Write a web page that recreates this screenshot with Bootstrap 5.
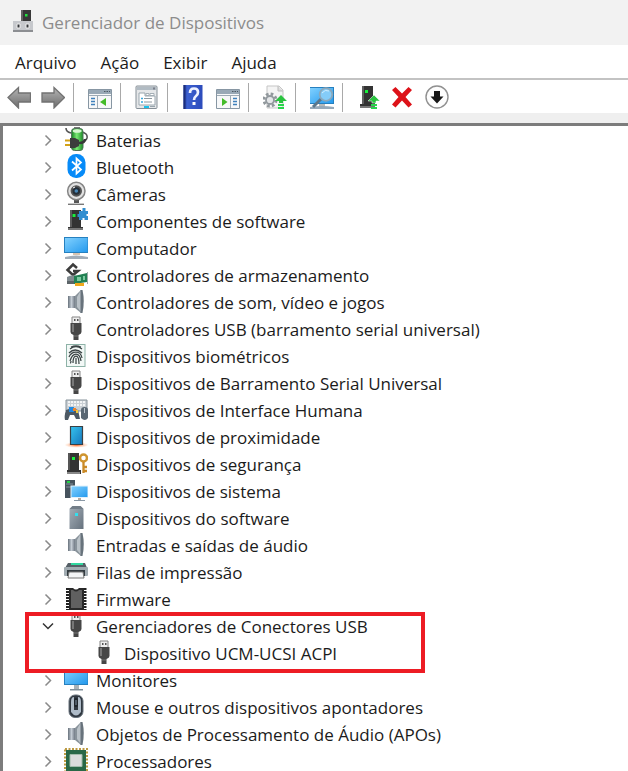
<!DOCTYPE html>
<html lang="pt-BR">
<head>
<meta charset="utf-8">
<meta name="viewport" content="width=device-width, initial-scale=1">
<title>Gerenciador de Dispositivos</title>
<link href="https://cdn.jsdelivr.net/npm/bootstrap@5.3.0/dist/css/bootstrap.min.css" rel="stylesheet">
<style>
body{font-family:"Open Sans","Noto Sans",sans-serif;font-size:17px;line-height:27px;color:#1b1b1b;background:#efefef}
.title-bar{background:#f2f2f2;height:45px;padding-left:12px;gap:6px;color:#8c8c8c}
.title-bar h1{font-size:17px;line-height:27px;font-weight:400}
.menu-bar{background:#fff;height:35px;padding:2px 15px 0;gap:24px;border-bottom:2px solid #c3c3c3}
.menu-bar button,.tool-bar button,.twist{border:0;background:none;padding:0;color:inherit;line-height:27px}
.tool-bar{background:#fff;height:33px;padding:3px 7px 0}
.tool-set{gap:10px;height:29px;padding-right:8px;margin-right:14px;border-right:1px solid #a9a9a9;align-items:center}
.tool-set:last-child{border:0}
.tool-bar button{display:flex}
.pic{width:24px;height:24px;flex:none;display:block}
.tree-pane{background:#fff;margin-top:10px;border:solid #7c7c7c;border-width:3px 0 0 3px;padding:1px 0 0 37px}
.tree-row{height:27px;gap:8px}
.tree-row .twist{width:16px;height:27px;display:flex;align-items:center;justify-content:center}
.tree-row .twist svg{width:16px;height:16px}
.sub-row{padding-left:52px}
.marked{position:relative}
.marked::after{content:"";position:absolute;left:-15px;top:-1px;width:400px;height:61px;border:4px solid #ed1c24;pointer-events:none;z-index:1}
</style>
<script src="https://cdn.jsdelivr.net/npm/bootstrap@5.3.0/dist/js/bootstrap.bundle.min.js"></script>
</head>
<body class="vh-100 d-flex flex-column overflow-hidden">
<svg width="0" height="0" class="position-absolute" aria-hidden="true">
<defs>
<linearGradient id="gScreen" x2="1" y2="1"><stop stop-color="#83d2ff"/><stop offset="1" stop-color="#2298ed"/></linearGradient>
<linearGradient id="gSteel" x2="1"><stop stop-color="#68727c"/><stop offset=".5" stop-color="#c4ccd4"/><stop offset="1" stop-color="#707984"/></linearGradient>
<linearGradient id="gBox" x2="1" y2="1"><stop stop-color="#a7b1ba"/><stop offset="1" stop-color="#65717d"/></linearGradient>
<linearGradient id="gArrow" x2="0" y2="1"><stop stop-color="#b5b5b5"/><stop offset="1" stop-color="#6c6c6c"/></linearGradient>
<linearGradient id="gHelp" x2="1" y2="0"><stop stop-color="#203a9a"/><stop offset=".2" stop-color="#3c60d0"/><stop offset="1" stop-color="#2c4bbb"/></linearGradient>
<linearGradient id="gGreen" x2="1"><stop stop-color="#167d22"/><stop offset=".45" stop-color="#7bea75"/><stop offset="1" stop-color="#1b8a26"/></linearGradient>
<linearGradient id="gTablet" x2="1" y2="1"><stop stop-color="#37c4ee"/><stop offset="1" stop-color="#1576bd"/></linearGradient>
<radialGradient id="gGlow"><stop stop-color="#ff5a14"/><stop offset="1" stop-color="#ffb98c" stop-opacity=".1"/></radialGradient>
<symbol id="right" viewBox="0 0 16 16"><path d="M5.500 3.500l5 5-5 5" fill="none" stroke="#8a8a8a" stroke-width="1.500"/></symbol>
<symbol id="down" viewBox="0 0 16 16"><path d="M3 5.500l5 5 5-5" fill="none" stroke="#333" stroke-width="1.500"/></symbol>
<symbol id="battery" viewBox="0 0 24 24"><path d="M2 1q0 4 5 5M17 5q7 1 6 6-1 4-8 4" fill="none" stroke="#555" stroke-width="1.600"/><rect x="10" y="0" width="6" height="3" fill="#777"/><rect x="7.500" y="1.500" width="11.500" height="22" rx="3" fill="url(#gGreen)" stroke="#50745a"/><ellipse cx="13.200" cy="4" rx="4.500" ry="1.800" fill="#d8f5d2"/><path d="M1 13.500h6M1 18h6" stroke="#d3a117" stroke-width="2"/><path d="M6 11h5l4 2v6l-4 2H6z" fill="#3c3c3c"/><path d="M15 16q6 0 6-4" fill="none" stroke="#383838" stroke-width="2.600"/></symbol>
<symbol id="bluetooth" viewBox="0 0 24 24"><rect x="3.500" y="0" width="18" height="24" rx="8.500" fill="#078bf8"/><path d="M8 7.500l9 8-4.500 4V4.500L17 8.500l-9 8" fill="none" stroke="#fff" stroke-width="1.700"/></symbol>
<symbol id="camera" viewBox="0 0 24 24"><path d="M10 18h5v4h-5z" fill="#555"/><path d="M4 23.300h16" stroke="#777" stroke-width="1.400"/><circle cx="12.300" cy="10" r="8.700" fill="#e2e2e2" stroke="#858585" stroke-width="1.500"/><circle cx="12.300" cy="10" r="5.700" fill="#555"/><circle cx="12.300" cy="10" r="3.800" fill="#252f39"/><circle cx="12.300" cy="10" r="1.800" fill="#4987b7"/><path d="M9 7l2-1" stroke="#fff"/></symbol>
<symbol id="component" viewBox="0 0 24 24"><path d="M6 2h11v17h2v3H4v-3h2z" fill="#333"/><path d="M6 2h2v17H6z" fill="#5c5c5c"/><path d="M4 20h15v2H4z" fill="#777"/><rect x="8.500" y="6" width="3" height="3" fill="#19ef3c"/><path d="M15 3h3.500V0h3v3H24v3h-1.500v2H24v4h-3.500v-2h-2v2H15V9h-1.500V6H15z" fill="#318ed0"/></symbol>
<symbol id="computer" viewBox="0 0 24 24"><rect x=".5" y="2.500" width="23.500" height="15" fill="url(#gScreen)" stroke="#2680bf"/><path d="M9 18h7v2H9z" fill="#d6c3b0"/><path d="M1 22q11-3 23 0v2H1z" fill="#a2adb8"/></symbol>
<symbol id="monitor" viewBox="0 0 24 24"><rect x=".5" y="2.500" width="23.500" height="15" fill="url(#gScreen)" stroke="#2680bf"/><path d="M10 18h5v4h-5z" fill="#a9b2b8"/><path d="M6 22h13v1.500H6z" fill="#81909a"/></symbol>
<symbol id="storage" viewBox="0 0 24 24"><path d="M13 6L9 2.500 3.500 8 9 13l5-4H9" fill="none" stroke="#3c3c3c" stroke-width="2.500"/><path d="M3 15q5-3 10-1v6H3z" fill="#818b90"/><path d="M3 19h10v3H3z" fill="#5c6468"/><path d="M10 14l13-3v9l-13 2z" fill="#238154"/><path d="M13 15h4v4h-4zM19 14h2v4h-2z" fill="#7ccba0"/><path d="M23.500 10v12" stroke="#9eaaa8"/><path d="M11 21h9v3h-9z" fill="#efa81d"/></symbol>
<symbol id="speaker" viewBox="0 0 24 24"><path d="M4 7h7v12H4z" fill="url(#gSteel)"/><path d="M11 7l6-6v23l-6-5z" fill="#89939b"/><path d="M13 8l4-7v22l-4-5z" fill="#b9c1c7"/><path d="M16.500 1h2q2.500 11 0 23h-2z" fill="#68737c"/></symbol>
<symbol id="usb" viewBox="0 0 24 24"><path d="M8 1h8v7H8z" fill="#eee" stroke="#858585"/><path d="M10 3h1.500v2H10zM13 3h1.500v2H13z" fill="#555"/><path d="M6.500 7h11v9q0 2-3 3v5h-5v-5q-3-1-3-3z" fill="#464646"/><path d="M8 8h2v8H8z" fill="#777"/><path d="M10 20h4" stroke="#777"/></symbol>
<symbol id="finger" viewBox="0 0 24 24"><rect x="2.500" y="1.500" width="18.500" height="22" fill="#f2f8f6" stroke="#8db2a7"/><path d="M6 6q6-5 12 0M5 10q6-6 13 0M5 14q2-5 7-5t6 6M6 18q2-7 6-7 4 0 5 7M9 20q0-7 3-7t3 8M12 15v6M6 20q1 0 1-2M7 4q5-2 10 0" fill="none" stroke="#3b4445" stroke-width="1.250"/></symbol>
<symbol id="hid" viewBox="0 0 24 24"><path d="M2 3h21v11H2z" fill="#cad0d5" stroke="#87939b"/><path d="M4 5h17M4 8h17" stroke="#fff" stroke-width="1.600" stroke-dasharray="2 1"/><path d="M2 13q6-3 12 0l2 9h-4l-2-4H6l-2 5H1q-1-4 1-10z" fill="#4d5964"/><path d="M5 10h5v5H5z" fill="#2289e0"/><path d="M9 11h3v3H9z" fill="#f08329"/><path d="M12 13h2v3h-2z" fill="#edcb3c"/><path d="M17 13q0-3 3.500-3t3.500 3v8q-3 4-7 0z" fill="#596773"/><path d="M20.500 11v5" stroke="#bdc7cf"/></symbol>
<symbol id="tablet" viewBox="0 0 24 24"><ellipse cx="12.500" cy="21" rx="11.500" ry="2.700" fill="url(#gGlow)"/><path d="M6.500 2.500h12v18h-12z" fill="url(#gTablet)" stroke="#3b4044" stroke-width="1.200"/></symbol>
<symbol id="security" viewBox="0 0 24 24"><path d="M4 2h11v17h2v4H3v-4h1z" fill="#333"/><path d="M4 2h2v17H4z" fill="#555"/><path d="M3 21h13v2H3z" fill="#888"/><rect x="8" y="6" width="3" height="3" fill="#19ef3c"/><circle cx="19.500" cy="7" r="3.500" fill="none" stroke="#cf942f" stroke-width="2.500"/><path d="M19.500 11v11M20 16h3M20 20h3" stroke="#ca8a27" stroke-width="2.300"/></symbol>
<symbol id="system" viewBox="0 0 24 24"><path d="M1 2h10v18H1z" fill="#46535d"/><path d="M2 6h7M2 9h7" stroke="#82919b"/><path d="M3 4h3" stroke="#20e244" stroke-width="1.800"/><rect x="7" y="8" width="17" height="11.500" fill="url(#gScreen)" stroke="#e2f1fb"/><path d="M14 20h3v2h-3z" fill="#b8aa9b"/><path d="M10 22h11v1H10z" fill="#8a98a5"/></symbol>
<symbol id="software" viewBox="0 0 24 24"><path d="M5.500 4l3-3h8l3 3v20h-14z" fill="url(#gBox)"/><path d="M5.500 4l3-3h8l3 3z" fill="#737e88"/><rect x="11" y="8" width="3" height="3" fill="#35dfed"/></symbol>
<symbol id="printer" viewBox="0 0 24 24"><path d="M4 4h17l2 5H1z" fill="#555f66"/><path d="M7 4h12v2H7z" fill="#31d8a0"/><rect x="0" y="8" width="24" height="9" rx="1" fill="#a1abb1"/><path d="M3 11h18v6H3z" fill="#343c41"/><path d="M5 13h14l1 6H4z" fill="#f3f5f6" stroke="#777"/></symbol>
<symbol id="firmware" viewBox="0 0 24 24"><path d="M3.500 2v22M21 2v22" stroke="#222" stroke-width="3" stroke-dasharray="2 1"/><path d="M5 2h4q3 3 6 0h5v22H5z" fill="#292929"/><path d="M7 4h2q3 3 6 0h3v18H7z" fill="#606060"/></symbol>
<symbol id="mouse" viewBox="0 0 24 24"><rect x="5" y="1" width="14" height="22.500" rx="6" fill="#303841" stroke="#68737d"/><path d="M7 8q0-5 3-5v13h4V3q3 0 3 5v10q-5 7-10 0z" fill="#aebbc8"/><rect x="10" y="4" width="4" height="9" rx="1.500" fill="#20272e"/><path d="M12 6v5" stroke="#7f91a3"/></symbol>
<symbol id="cpu" viewBox="0 0 24 24"><path d="M1 1h22v23H1z" fill="none" stroke="#bd9b43" stroke-width="2" stroke-dasharray="2 1.500"/><path d="M2 2h20v22H2z" fill="#296847"/><path d="M6 6.500h12v12H6z" fill="#dadcdb" stroke="#a1bbaa"/></symbol>
</defs>
</svg>

<header class="title-bar d-flex align-items-center">
<svg class="pic" viewBox="0 0 24 24" aria-hidden="true"><path d="M9 0h10v12H9z" fill="#383838"/><path d="M9 0h2v12H9z" fill="#636363"/><rect x="13" y="4" width="2.500" height="2.500" fill="#1fe23d"/><path d="M1 11h20v11H1z" fill="#c6c8cc"/><path d="M1 20h20v2H1z" fill="#8c8e92"/><path d="M5 14h3v4H5zM14 14h3v4h-3z" fill="#34373b" stroke="#eee"/></svg>
<h1 class="m-0">Gerenciador de Dispositivos</h1>
</header>
<nav class="menu-bar d-flex align-items-center flex-shrink-0" aria-label="Menu">
<button type="button">Arquivo</button><button type="button">Ação</button><button type="button">Exibir</button><button type="button">Ajuda</button>
</nav>
<div class="tool-bar d-flex flex-shrink-0" role="toolbar" aria-label="Ferramentas">
<div class="tool-set d-flex">
<button type="button" aria-label="Voltar"><svg class="pic" viewBox="0 0 24 24"><path d="M1 12.500L11.500 2.500v5.500H23.500v9H11.500v6z" fill="url(#gArrow)" stroke="#727272" stroke-width="1.300"/></svg></button>
<button type="button" aria-label="Avançar"><svg class="pic" viewBox="0 0 24 24"><path d="M23.500 12.500L13 2.500v5.500H1v9h12v6z" fill="url(#gArrow)" stroke="#727272" stroke-width="1.300"/></svg></button>
</div>
<div class="tool-set d-flex">
<button type="button" aria-label="Mostrar árvore"><svg class="pic" viewBox="0 0 24 24"><path d="M.5 4.500h23v19H.5z" fill="#f7f8f9" stroke="#8796a3"/><path d="M1 5h22v4H1z" fill="#99a9b6"/><path d="M16 6.500h6" stroke="#4c5963" stroke-dasharray="1.500 1"/><path d="M1 10.500h22M9.500 11v12" stroke="#9eabb5"/><path d="M3 13.500h4M3 16.500h4M3 19.500h4" stroke="#3f80bc" stroke-width="1.500"/><path d="M18 13v8l-6-4z" fill="#43bb29"/></svg></button>
</div>
<div class="tool-set d-flex">
<button type="button" aria-label="Propriedades"><svg class="pic" viewBox="0 0 24 24"><rect x="1" y="1" width="21" height="22.500" rx="1" fill="#e5e7e9" stroke="#858f97"/><path d="M2 2h19v3H2z" fill="#b1bbc3"/><path d="M19 2.500v2" stroke="#445"/><path d="M4 8h6v3h10v9H4z" fill="#fff" stroke="#9ba7af"/><path d="M11 8.500h3v2h-3zM15 8.500h4v2h-4z" fill="#fff" stroke="#a5afb6"/><path d="M6 13.500h2M6 17h2" stroke="#36a7de" stroke-width="1.600"/><path d="M9 13.500h8M9 17h8" stroke="#8e98a0"/><path d="M9 21h5v2H9z" fill="#18c3ef"/><path d="M15 21.500h5" stroke="#98a4ac"/></svg></button>
</div>
<div class="tool-set d-flex">
<button type="button" aria-label="Ajuda"><svg class="pic" viewBox="0 0 24 24"><path d="M1.500 0h19v24h-19z" fill="url(#gHelp)"/><path d="M1.500 0h2v24h-2z" fill="#1c2e7c"/><path d="M8 8q0-4.500 4-4.500T16 7q0 2.500-2 4-2 1.500-2 4" fill="none" stroke="#eef2ff" stroke-width="2.700"/><path d="M10.500 17h3v3h-3z" fill="#fff"/></svg></button>
<button type="button" aria-label="Mostrar painel"><svg class="pic" viewBox="0 0 24 24"><path d="M.5 4.500h23v19H.5z" fill="#f7f8f9" stroke="#8796a3"/><path d="M1 5h22v4H1z" fill="#99a9b6"/><path d="M16 6.500h6" stroke="#4c5963" stroke-dasharray="1.500 1"/><path d="M1 10.500h22M14.500 11v12" stroke="#9eabb5"/><path d="M17 13.500h4M17 16.500h4M17 19.500h4" stroke="#3f80bc" stroke-width="1.500"/><path d="M6 13v8l5.500-4z" fill="#43bb29"/></svg></button>
</div>
<div class="tool-set d-flex">
<button type="button" aria-label="Atualizar driver"><svg class="pic" viewBox="0 0 24 24"><path d="M4 1h12l4 4v18H4z" fill="#f4f4f4" stroke="#c5c5c5"/><path d="M15 1v5h5" fill="#ddd" stroke="#bbb"/><circle cx="7" cy="15" r="6" fill="none" stroke="#91989c" stroke-width="3" stroke-dasharray="2.600 2.100"/><circle cx="7" cy="15" r="4" fill="#e4e6e8" stroke="#92999e" stroke-width="1.800"/><path d="M18 10l6 6h-4v2h-4v-2h-4z" fill="#2bc340"/><path d="M15 20h6M15 23h6" stroke="#27d64a" stroke-width="1.800"/></svg></button>
</div>
<div class="tool-set d-flex">
<button type="button" aria-label="Verificar alterações de hardware"><svg class="pic" viewBox="0 0 24 24"><rect x="-.5" y="2.500" width="24" height="16" fill="url(#gScreen)" stroke="#2680bf"/><path d="M9 19h6v3H9z" fill="#b7b9b9"/><path d="M0 22q12-2 24 0v2H0z" fill="#96a9b9"/><path d="M11 14L3 22" stroke="#5c778b" stroke-width="3"/><circle cx="16" cy="9.500" r="6.300" fill="#84ccf8" stroke="#8ba8bb" stroke-width="1.800"/><path d="M12 8q3-4 7-2" stroke="#d3efff" fill="none"/></svg></button>
</div>
<div class="tool-set d-flex">
<button type="button" aria-label="Adicionar driver"><svg class="pic" viewBox="0 0 24 24"><path d="M5 1h11v17h2v5H3v-4h2z" fill="#333"/><path d="M5 1h2v18H5z" fill="#606060"/><path d="M3 21h15v2H3z" fill="#777"/><rect x="8" y="5" width="3" height="3" fill="#19ef3c"/><path d="M17 10l6 6h-4v2h-4v-2h-4z" fill="#2bc340" stroke="#fff" stroke-width=".5"/><path d="M14 20h6M14 23h6" stroke="#27d64a" stroke-width="1.800"/></svg></button>
<button type="button" aria-label="Desinstalar dispositivo"><svg class="pic" viewBox="0 0 24 24"><path d="M1 5l3.500-3 6.500 6.500L17.500 2 21 5l-6.500 7L21 19.500 17.500 22.500 11 15.500 4.500 22.500 1 19.500 7.500 12z" fill="#dd1219"/></svg></button>
<button type="button" aria-label="Desabilitar dispositivo"><svg class="pic" viewBox="0 0 24 24"><circle cx="12" cy="12" r="11" fill="#fdfdfd" stroke="#909090" stroke-width="1.400"/><path d="M9 6h6v5.500h3.500L12 18.500l-6.500-7H9z" fill="#171717"/></svg></button>
</div>
</div>

<main class="tree-pane flex-grow-1 overflow-hidden">
<ul class="list-unstyled m-0" id="deviceTree">
</ul>
</main>
<script>
const devices=[["battery","Baterias"],["bluetooth","Bluetooth"],["camera","Câmeras"],["component","Componentes de software"],["computer","Computador"],["storage","Controladores de armazenamento"],["speaker","Controladores de som, vídeo e jogos"],["usb","Controladores USB (barramento serial universal)"],["finger","Dispositivos biométricos"],["usb","Dispositivos de Barramento Serial Universal"],["hid","Dispositivos de Interface Humana"],["tablet","Dispositivos de proximidade"],["security","Dispositivos de segurança"],["system","Dispositivos de sistema"],["software","Dispositivos do software"],["speaker","Entradas e saídas de áudio"],["printer","Filas de impressão"],["firmware","Firmware"],["usb","Gerenciadores de Conectores USB",["usb","Dispositivo UCM-UCSI ACPI"]],["monitor","Monitores"],["mouse","Mouse e outros dispositivos apontadores"],["speaker","Objetos de Processamento de Áudio (APOs)"],["cpu","Processadores"]];
const item=(icon,name)=>`<svg class="pic" aria-hidden="true"><use href="#${icon}"/></svg><span class="text-nowrap">${name}</span>`;
document.getElementById("deviceTree").innerHTML=devices.map(([icon,name,child])=>`<li class="${child?"marked":""}"><div class="tree-row d-flex"><button class="twist" type="button" aria-expanded="${!!child}" aria-label="${name}"><svg><use href="#${child?"down":"right"}"/></svg></button>${item(icon,name)}</div>${child?`<ul class="list-unstyled m-0"><li class="tree-row sub-row d-flex">${item(...child)}</li></ul>`:""}</li>`).join("");
</script>
</body>
</html>
